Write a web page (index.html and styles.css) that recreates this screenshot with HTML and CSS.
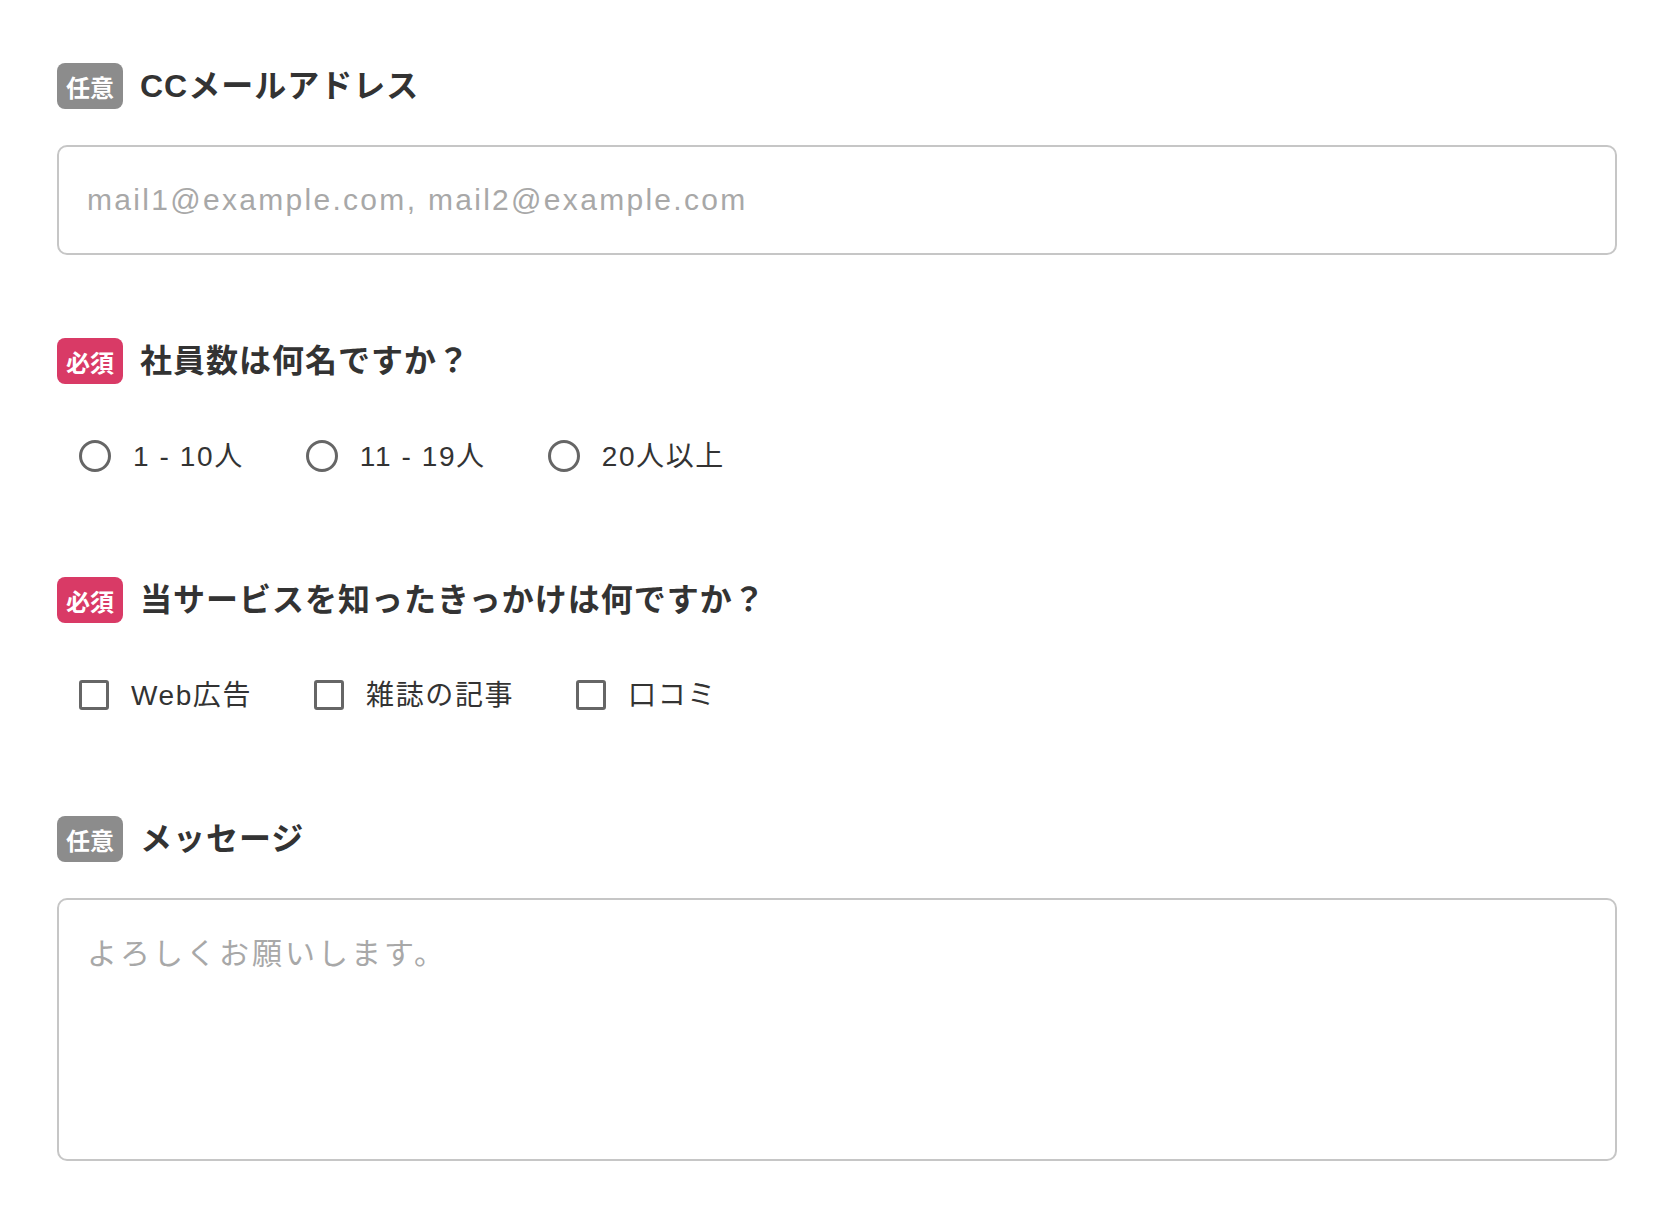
FILE: index.html
```html
<!DOCTYPE html>
<html lang="ja">
<head>
  <meta charset="utf-8" />
  <meta name="viewport" content="width=device-width, initial-scale=1.0" />
  <title>お問い合わせフォーム</title>
  <link rel="stylesheet" href="styles.css">
</head>
<body>
  <form class="contact-form">
    <div class="field">
      <div class="field-head">
        <span class="badge optional">任意</span>
        <label class="field-title" for="cc">CCメールアドレス</label>
      </div>
      <input id="cc" class="text-input" type="text" placeholder="mail1@example.com, mail2@example.com" />
    </div>

    <div class="field">
      <div class="field-head">
        <span class="badge required">必須</span>
        <span class="field-title">社員数は何名ですか？</span>
      </div>
      <div class="options">
        <label class="option"><input type="radio" name="size" /><span>1 - 10人</span></label>
        <label class="option"><input type="radio" name="size" /><span>11 - 19人</span></label>
        <label class="option"><input type="radio" name="size" /><span>20人以上</span></label>
      </div>
    </div>

    <div class="field">
      <div class="field-head">
        <span class="badge required">必須</span>
        <span class="field-title">当サービスを知ったきっかけは何ですか？</span>
      </div>
      <div class="options">
        <label class="option"><input type="checkbox" /><span>Web広告</span></label>
        <label class="option"><input type="checkbox" /><span>雑誌の記事</span></label>
        <label class="option"><input type="checkbox" /><span>口コミ</span></label>
      </div>
    </div>

    <div class="field">
      <div class="field-head">
        <span class="badge optional">任意</span>
        <label class="field-title" for="message">メッセージ</label>
      </div>
      <textarea id="message" class="text-area" placeholder="よろしくお願いします。"></textarea>
    </div>
  </form>
</body>
</html>
```

FILE: styles.css
```css
html, body {
  margin: 0;
  background: #ffffff;
  font-family: "Liberation Sans", "Noto Sans CJK JP", sans-serif;
  color: #333333;
}

.contact-form {
  padding: 63px 51px 0 57px;
}

.field {
  margin-bottom: 83px;
}

.field:nth-child(2),
.field:nth-child(3) {
  margin-bottom: 101px;
}

.field-head {
  display: flex;
  align-items: center;
  gap: 17px;
  height: 46px;
}

.badge {
  display: flex;
  align-items: center;
  justify-content: center;
  width: 66px;
  height: 46px;
  border-radius: 8px;
  color: #ffffff;
  font-size: 24px;
  font-weight: bold;
}

.badge.optional {
  background-color: #8c8c8c;
}

.badge.required {
  background-color: #d93a66;
}

.field-title {
  padding-bottom: 6px;
  font-size: 32px;
  font-weight: bold;
  letter-spacing: 1px;
  color: #333333;
}

.text-input,
.text-area {
  display: block;
  width: 100%;
  box-sizing: border-box;
  margin-top: 36px;
  border: 2px solid #c6c6c6;
  border-radius: 10px;
  font-family: inherit;
  font-size: 30px;
  color: #333333;
  outline: none;
}

.text-input {
  height: 110px;
  padding: 0 28px;
  letter-spacing: 2.3px;
}

.text-area {
  height: 263px;
  padding: 29px 28px;
  letter-spacing: 3px;
  resize: none;
}

.text-input::placeholder,
.text-area::placeholder {
  color: #a8a8a8;
}

.options {
  display: flex;
  gap: 62px;
  height: 40px;
  margin-top: 52px;
  padding-left: 22px;
}

.option {
  display: flex;
  align-items: center;
  gap: 22px;
  font-size: 28px;
  letter-spacing: 1.6px;
  color: #333333;
  cursor: pointer;
}

.option span {
  padding-bottom: 4px;
}

.option input {
  appearance: none;
  margin: 0;
  box-sizing: border-box;
  border: 3px solid #666666;
  background: #ffffff;
}

.option input[type="radio"] {
  width: 32px;
  height: 32px;
  border-radius: 50%;
}

.option input[type="checkbox"] {
  width: 30px;
  height: 30px;
  border-radius: 3px;
}
```
